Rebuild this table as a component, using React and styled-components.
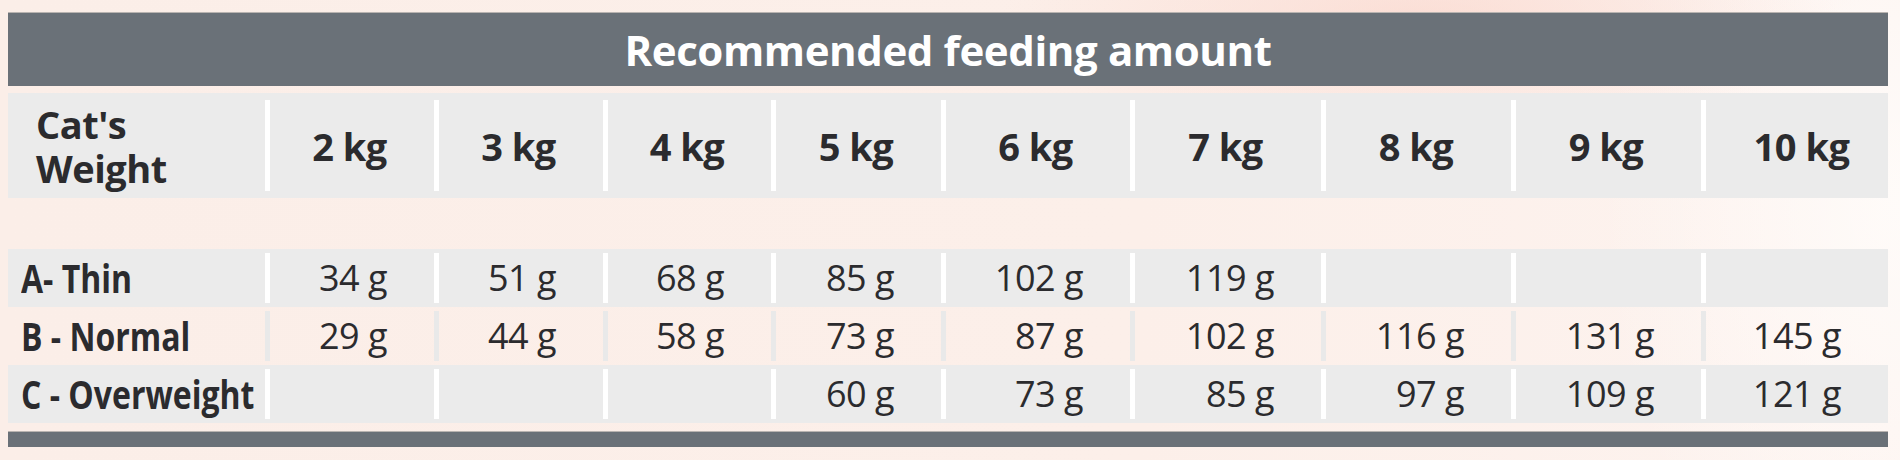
import React from 'react';
import styled, { createGlobalStyle } from 'styled-components';

const GlobalStyle = createGlobalStyle`
  body {
    margin: 0;
    font-family: 'Open Sans', 'Noto Sans', sans-serif;
    color: #2b2b2e;
  }
`;

const COLUMNS = '257px 169px 169px 168px 170px 189px 191px 190px 190px 187px';

const weights = ['2 kg', '3 kg', '4 kg', '5 kg', '6 kg', '7 kg', '8 kg', '9 kg', '10 kg'];

const rows = [
  {
    label: 'A- Thin',
    shaded: true,
    values: ['34 g', '51 g', '68 g', '85 g', '102 g', '119 g', '', '', ''],
  },
  {
    label: 'B - Normal',
    shaded: false,
    values: ['29 g', '44 g', '58 g', '73 g', '87 g', '102 g', '116 g', '131 g', '145 g'],
  },
  {
    label: 'C - Overweight',
    shaded: true,
    values: ['', '', '', '60 g', '73 g', '85 g', '97 g', '109 g', '121 g'],
  },
];

const Page = styled.div`
  height: 460px;
  box-sizing: border-box;
  padding: 12px 12px 0 8px;
  overflow: hidden;
  background:
    radial-gradient(ellipse 420px 120px at 1420px 20px, rgba(250, 214, 204, 0.7), transparent),
    radial-gradient(ellipse 300px 460px at 1900px 200px, rgba(255, 252, 250, 0.9), transparent),
    linear-gradient(90deg, #fbeee8 0%, #fcefe9 60%, #fdf3ef 100%);
`;

const Bar = styled.div`
  height: ${p => p.$height}px;
  margin-top: ${p => p.$gap || 0}px;
  background: #6a7178;
  border-top: 1px solid #b9b4b1;
  box-sizing: border-box;
`;

const TitleBar = styled(Bar)`
  display: flex;
  align-items: center;
  justify-content: center;
  color: #ffffff;
  font-size: 42px;
  font-weight: 700;
  letter-spacing: -0.4px;
`;

const Row = styled.div`
  display: grid;
  grid-template-columns: ${COLUMNS};
  height: ${p => p.$height}px;
  margin-top: ${p => p.$gap || 0}px;
  background: ${p => (p.$shaded ? '#ebebeb' : 'transparent')};
`;

const Cell = styled.div`
  display: flex;
  align-items: center;
  justify-content: ${p =>
    p.$align === 'left' ? 'flex-start' : p.$align === 'right' ? 'flex-end' : 'center'};
  padding: ${p =>
    p.$align === 'right'
      ? '0 47px 0 0'
      : p.$align === 'left'
      ? `0 0 0 ${p.$indent || 0}px`
      : `0 0 0 ${p.$shift || 0}px`};
  background: ${p =>
    p.$divider
      ? `linear-gradient(${p.$dividerColor}, ${p.$dividerColor}) left center / 5px calc(100% - ${p.$inset * 2}px) no-repeat`
      : 'none'};
`;

const HeadText = styled.span`
  font-size: 38px;
  font-weight: 700;
  line-height: 44px;
  letter-spacing: -0.5px;
`;

const LabelText = styled.span`
  display: inline-block;
  font-size: 40px;
  font-weight: 700;
  line-height: 1;
  white-space: nowrap;
  transform: scaleX(0.8);
  transform-origin: left center;
`;

const ValueText = styled.span`
  font-size: 36px;
  font-weight: 400;
  line-height: 1;
  letter-spacing: -0.5px;
  white-space: nowrap;
`;

export default function App() {
  return (
    <Page>
      <GlobalStyle />
      <TitleBar $height={74}>Recommended feeding amount</TitleBar>

      <Row $height={105} $gap={7} $shaded>
        <Cell $align="left" $indent={28}>
          <HeadText>
            Cat's
            <br />
            Weight
          </HeadText>
        </Cell>
        {weights.map((w, i) => (
          <Cell
            key={w}
            $divider
            $dividerColor="#ffffff"
            $inset={7}
            $shift={i === weights.length - 1 ? 14 : 0}
          >
            <HeadText>{w}</HeadText>
          </Cell>
        ))}
      </Row>

      {rows.map((row, i) => (
        <Row key={row.label} $height={58} $gap={i === 0 ? 51 : 0} $shaded={row.shaded}>
          <Cell $align="left" $indent={13}>
            <LabelText>{row.label}</LabelText>
          </Cell>
          {row.values.map((v, j) => (
            <Cell
              key={j}
              $align="right"
              $divider
              $dividerColor={row.shaded ? '#ffffff' : '#e9e9e9'}
              $inset={4}
            >
              <ValueText>{v}</ValueText>
            </Cell>
          ))}
        </Row>
      ))}

      <Bar $height={16} $gap={8} />
    </Page>
  );
}
